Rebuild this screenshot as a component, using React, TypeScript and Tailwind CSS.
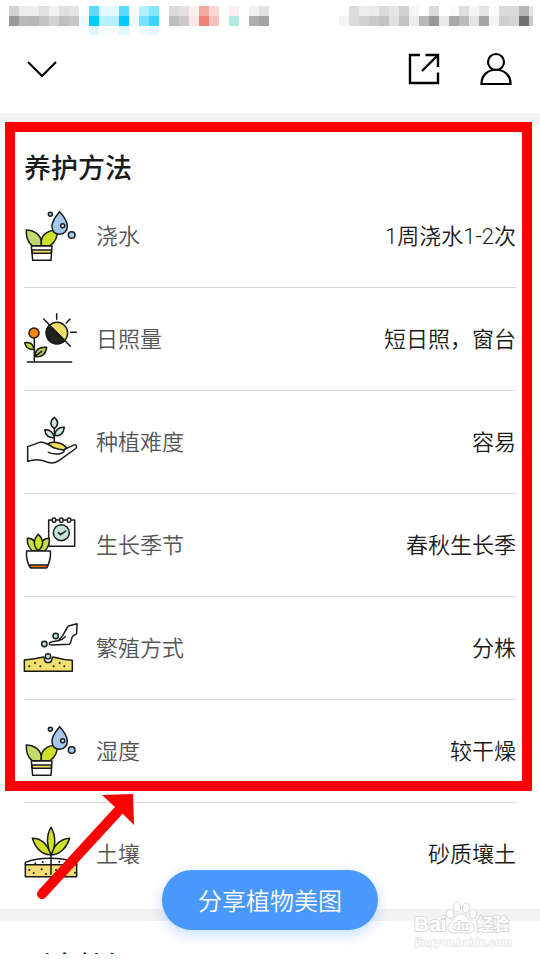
import type { ReactNode } from "react";

const W = "#fff";

const statusLeft = [
  ["#d3d3d3", "#ededed", "#ededed", "#e0e0e0", "#f2f2f2", "#e0e0e0", "#e4e4e4", W, "#59dcff", "#e2f8ff", "#e2f8ff", "#59dcff", W, "#b3efff", "#85e7ff", W, "#dadada", "#e1e1e1", "#fcefee", "#f0aaa0", "#f8d8d4", W, "#fdeff1", W, "#f2f2f2", "#e2e2e2"],
  ["#999", "#b8b8b8", "#b6b6b6", "#c4c4c4", "#d2d2d2", "#bfbfbf", "#c7c7c7", "#edfaff", "#00caff", "#b7efff", "#b7efff", "#00caff", "#edfaff", "#78e0ff", "#38d6ff", W, "#bebebe", "#cacaca", "#fce8e6", "#ec8374", "#f4c2bb", "#fcfdf9", "#b6e8e3", "#fdfdfd", "#aeaeae", "#a3a3a3"],
  [W, W, W, W, W, W, W, W, "#ddf6ff", "#f7feff", "#f7feff", "#ddf6ff", W, "#effcff", "#e4f8ff"],
];

const statusRight = [
  [W, "#dcdcdc", "#eee", "#ebebeb", "#dadada", "#e6e6e6", "#d0d0d0", "#f4f4f4", W, "#dadada", W, "#fbfbfb", "#dedede", "#f4f4f4", "#e5e5e5", "#fbfbfb", "#dadada", "#dadada", "#b8b8b8", "#e4e4e4"],
  ["#f5f5f5", "#dadada", "#d2d2d2", "#cacaca", "#c3c3c3", "#e0e0e0", "#c3c3c3", "#ececec", "#b8b8b8", "#979797", "#e9e9e9", "#a8a8a8", "#bcbcbc", "#e4e4e4", "#a3a3a3", "#f4f4f4", "#cfcfcf", "#d4d4d4", "#707070", "#cacaca"],
];

function Mosaic({ rows, width }: { rows: string[][]; width: number }) {
  return (
    <svg aria-hidden="true" height="29" shapeRendering="crispEdges" viewBox={`0 0 ${width} 29`} width={width}>
      {rows.map((row, y) =>
        row.map((fill, x) => <rect fill={fill} height="10" key={`${x}-${y}`} width="10" x={x * 10} y={y * 10} />),
      )}
    </svg>
  );
}

function Icon({ viewBox, children }: { viewBox: string; children: ReactNode }) {
  return (
    <svg
      aria-hidden="true"
      className="h-[54px] w-[54px] shrink-0 overflow-visible"
      fill="none"
      stroke="#1a1a1a"
      strokeLinecap="round"
      strokeLinejoin="round"
      strokeWidth="4.5"
      viewBox={viewBox}
    >
      {children}
    </svg>
  );
}

function WaterIcon() {
  return (
    <Icon viewBox="27 28 162 162">
      <path d="M34 91C54 90 76 103 79 125V138H51C38 127 33 110 34 91Z" fill="#c3d96b" />
      <path d="M127 92C103 89 82 104 79 122V138H106C121 127 128 112 127 92Z" fill="#cfe02a" />
      <path d="M134 36C120 52 110 66 111 81C112 96 121 104 134 104C147 104 157 94 157 80C157 64 146 49 134 36Z" fill="#a4c8ea" />
      <circle cx="143" cy="78" fill="#fff" r="6" />
      <circle cx="106" cy="44" fill="#a4c8ea" r="6" />
      <circle cx="170" cy="106" fill="#a4c8ea" r="10" />
      <path d="M49 139H111L108 182H53Z" fill="#fff" />
      <path d="M51 151H109V161H52Z" fill="#f6e36d" />
    </Icon>
  );
}

function SunIcon() {
  return (
    <Icon viewBox="27 37 162 162">
      <circle cx="126" cy="100" fill="#f1e06b" r="32" />
      <path d="M103 77A32 32 0 0 0 149 123Z" fill="#222" />
      <path d="M86 58L166 140M125 42V59M165 58L154 70M167 98H184M37 187H170M58 116V186" />
      <circle cx="57" cy="100" fill="#ff8a00" r="15" />
      <path d="M29 129C45 127 55 135 57 149C41 151 32 143 29 129Z" fill="#c5dc28" />
      <path d="M95 143C72 141 60 151 60 170C81 175 93 162 95 143ZM60 170L80 155" fill="#b4c957" />
    </Icon>
  );
}

function HandIcon() {
  return (
    <Icon viewBox="27 33 162 162">
      <path d="M38 128L74 115C93 113 105 125 116 131L147 137L174 124C186 119 188 128 180 135L133 169C121 178 112 179 99 175C82 167 64 163 38 172Z" fill="#fff" />
      <path d="M97 120C111 110 141 114 154 131L147 138C133 137 121 133 116 131C109 127 103 123 97 120Z" fill="#f8df5b" />
      <path d="M147 137C152 149 124 155 100 145" />
      <path d="M118 115V73" />
      <path d="M118 40C104 51 105 65 118 73C131 64 131 50 118 40Z" fill="#cdebe0" />
      <path d="M118 101C114 83 102 76 89 77C91 95 103 103 118 101Z" fill="#cdebe0" />
      <path d="M119 94C134 98 146 88 148 70C132 68 120 78 119 94Z" fill="#cdebe0" />
    </Icon>
  );
}

function SeasonIcon() {
  return (
    <Icon viewBox="27 40 162 162">
      <path d="M101 46H179V125H101Z" fill="#fff" />
      <rect fill="#fff" height="13" rx="4" width="10" x="112" y="40" />
      <rect fill="#fff" height="13" rx="4" width="10" x="134" y="40" />
      <rect fill="#fff" height="13" rx="4" width="10" x="157" y="40" />
      <circle cx="139" cy="84" fill="#c2e3d8" r="24" />
      <path d="M130 84L137 90L152 79" />
      <path d="M37 101C54 100 68 114 70 138H51C41 128 36 114 37 101Z" fill="#c5dc50" />
      <path d="M103 101C86 100 73 114 70 138H90C100 128 104 114 103 101Z" fill="#c5dc50" />
      <path d="M70 89C54 105 54 124 70 138C87 124 87 105 70 89Z" fill="#cfe02a" />
      <path d="M35 139H106C108 154 104 171 97 187H44C36 170 33 154 35 139Z" fill="#fff" />
      <path d="M43 181H99L95 190H47Z" fill="#ff7a00" />
    </Icon>
  );
}

function SeedIcon() {
  return (
    <Icon viewBox="27 33 162 162">
      <path d="M28 150C51 148 69 145 86 141C91 147 94 150 100 150C106 150 110 146 114 141C132 146 151 150 172 151V184H28Z" fill="#f0df6c" />
      <circle cx="99" cy="146" fill="#fff" r="11" stroke="none" />
      <path d="M88 145C89 162 110 162 111 145" fill="#fff" />
      <circle cx="99" cy="139" fill="#bce1d2" r="8" />
      <circle cx="88" cy="102" fill="#bce1d2" r="8" />
      <circle cx="122" cy="78" fill="#bce1d2" r="8" />
      <path d="M186 41L160 48C153 56 149 69 142 78L130 92L111 95C101 96 100 105 109 105L163 103C172 94 167 87 173 79L185 71ZM130 92C140 90 145 86 151 80" fill="#fff" />
      <g fill="#1a1a1a" stroke="none">
        <circle cx="60" cy="159" r="3" />
        <circle cx="43" cy="169" r="3" />
        <circle cx="76" cy="169" r="3" />
        <circle cx="134" cy="159" r="3" />
        <circle cx="116" cy="169" r="3" />
        <circle cx="148" cy="169" r="3" />
      </g>
    </Icon>
  );
}

function SoilIcon() {
  return (
    <Icon viewBox="72 168 162 162">
      <path d="M76 281V274C119 257 181 258 230 274V281" fill="#fff" />
      <path d="M76 281H230V317H76Z" fill="#f3dc73" />
      <path d="M153 252V310" />
      <path d="M97 202C121 201 144 219 153 252C125 251 106 230 97 202Z" fill="#cfe02a" />
      <path d="M209 202C185 203 162 219 153 252C182 251 201 228 209 202Z" fill="#cfe02a" />
      <path d="M153 169C138 194 140 226 153 252C168 226 168 194 153 169Z" fill="#cfe02a" />
      <g fill="#1a1a1a" stroke="none">
        <circle cx="106" cy="277" r="3" />
        <circle cx="128" cy="273" r="3" />
        <circle cx="178" cy="272" r="3" />
        <circle cx="88" cy="297" r="3" />
        <circle cx="101" cy="306" r="3" />
        <circle cx="125" cy="295" r="3" />
        <circle cx="138" cy="309" r="3" />
        <circle cx="168" cy="297" r="3" />
        <circle cx="192" cy="307" r="3" />
        <circle cx="225" cy="305" r="3" />
      </g>
    </Icon>
  );
}

const careItems = [
  { label: "浇水", value: "1周浇水1-2次", icon: <WaterIcon /> },
  { label: "日照量", value: "短日照，窗台", icon: <SunIcon /> },
  { label: "种植难度", value: "容易", icon: <HandIcon /> },
  { label: "生长季节", value: "春秋生长季", icon: <SeasonIcon /> },
  { label: "繁殖方式", value: "分株", icon: <SeedIcon /> },
  { label: "湿度", value: "较干燥", icon: <WaterIcon /> },
  { label: "土壤", value: "砂质壤土", icon: <SoilIcon /> },
];

function Header() {
  return (
    <header className="h-[113px] pt-[6px]">
      <div className="flex justify-between pr-[7px] pl-[9px]">
        <Mosaic rows={statusLeft} width={260} />
        <Mosaic rows={statusRight} width={194} />
      </div>
      <nav className="flex items-center justify-between px-[26px] pt-4">
        <button aria-label="收起" className="flex h-9 w-8 items-center justify-center" type="button">
          <svg fill="none" height="18" stroke="#000" strokeWidth="2.2" viewBox="0 0 30 18" width="30">
            <path d="M1 2L15 16L29 2" />
          </svg>
        </button>
        <div className="flex gap-9">
          <button aria-label="分享" className="flex h-9 w-9 items-center justify-center" type="button">
            <svg fill="none" height="32" stroke="#000" strokeWidth="2.4" viewBox="0 0 32 32" width="32">
              <path d="M12 2H2V30H30V19.500M17.500 2H30V14M30 2L14 18" />
            </svg>
          </button>
          <button aria-label="我的" className="flex h-9 w-9 items-center justify-center" type="button">
            <svg fill="none" height="34" stroke="#000" strokeWidth="2.2" viewBox="0 0 32 34" width="32">
              <circle cx="16" cy="10" r="8" />
              <path d="M1.500 32C1 13 31 13 30.500 32Z" />
            </svg>
          </button>
        </div>
      </nav>
    </header>
  );
}

function Watermark() {
  return (
    <svg
      aria-label="Baidu 经验"
      className="pointer-events-none absolute right-7 bottom-1"
      height="50"
      role="img"
      viewBox="0 0 100 50"
      width="100"
    >
      <g fill="#fff" fillOpacity="0.9" stroke="#d9d9d9">
        <ellipse cx="38" cy="14" rx="3.500" ry="4.500" />
        <ellipse cx="45" cy="7" rx="3.500" ry="5" />
        <ellipse cx="54" cy="8" rx="3.500" ry="5" />
        <ellipse cx="61" cy="14" rx="3.500" ry="4.500" />
        <path d="M49 14C43 14 42 20 38 23C34 28 36 33 42 33H57C63 33 64 27 60 23C56 20 55 14 49 14Z" />
      </g>
      <g fill="#fff" fontFamily="'Liberation Sans', 'Noto Sans CJK SC', sans-serif" fontWeight="700" paintOrder="stroke" stroke="#d9d9d9" strokeWidth="2">
        <text fontSize="21" x="2" y="31">Bai</text>
        <text fontSize="13" x="41" y="30">du</text>
        <text fontSize="16" x="65" y="30">经验</text>
        <text fontSize="11" strokeWidth="1" x="3" y="46">jingyan.baidu.com</text>
      </g>
    </svg>
  );
}

export default function App() {
  return (
    <div className="relative overflow-hidden bg-white font-['Roboto','Noto_Sans_CJK_SC',sans-serif] text-[#1a1a1a]">
      <Header />
      <div className="h-3 bg-[#f3f3f3]" />
      <main className="px-6 pb-[3px]">
        <h2 className="pt-7 text-[27px] leading-8 font-medium">养护方法</h2>
        <ul>
          {careItems.map((item) => (
            <li
              className="flex h-[103px] items-center border-b border-[#d6d6d6] last:border-transparent"
              key={item.label}
            >
              {item.icon}
              <span className="ml-[18px] text-[22px] font-[350] text-[#555]">{item.label}</span>
              <span className="ml-auto text-[22px] font-[350]">{item.value}</span>
            </li>
          ))}
        </ul>
      </main>
      <div className="h-3 bg-[#f3f3f3]" />
      <section className="h-[33px] overflow-hidden px-6 pt-[27px]">
        <h2 className="text-[27px] leading-[38px] font-medium">形态特征</h2>
      </section>

      <button
        className="absolute bottom-6 left-1/2 h-[60px] w-[216px] -translate-x-1/2 rounded-full bg-[#4a98fb] pt-[3px] text-2xl font-[350] text-white shadow-[0_4px_14px_rgba(74,152,251,0.35)]"
        type="button"
      >
        分享植物美图
      </button>
      <Watermark />

      <div className="pointer-events-none absolute top-[122px] right-2 left-[5px] h-[669px] border-10 border-[#f00]" />
      <svg
        aria-hidden="true"
        className="pointer-events-none absolute top-[790px] left-[30px]"
        height="116"
        viewBox="30 790 110 116"
        width="110"
      >
        <path d="M42 894L120 809" stroke="#f00" strokeLinecap="round" strokeWidth="10" />
        <path d="M133 794L102 795L115 807L122 813L134 825Z" fill="#f00" />
      </svg>
    </div>
  );
}
